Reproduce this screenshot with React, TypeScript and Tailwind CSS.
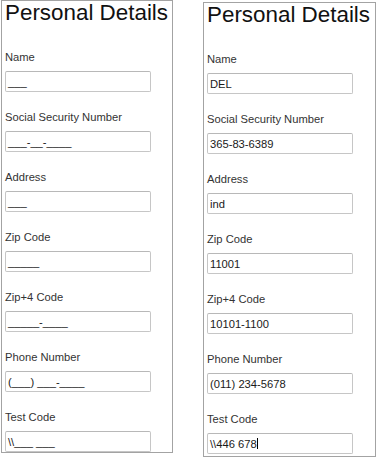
import React from "react";

type Field = { label: string; value: string };

const leftFields: Field[] = [
  { label: "Name", value: "___" },
  { label: "Social Security Number", value: "___-__-____" },
  { label: "Address", value: "___" },
  { label: "Zip Code", value: "_____" },
  { label: "Zip+4 Code", value: "_____-____" },
  { label: "Phone Number", value: "(___) ___-____" },
  { label: "Test Code", value: "\\\\___ ___" },
];

const rightFields: Field[] = [
  { label: "Name", value: "DEL" },
  { label: "Social Security Number", value: "365-83-6389" },
  { label: "Address", value: "ind" },
  { label: "Zip Code", value: "11001" },
  { label: "Zip+4 Code", value: "10101-1100" },
  { label: "Phone Number", value: "(011) 234-5678" },
  { label: "Test Code", value: "\\\\446 678" },
];

function Panel({ fields, caretLast, className }: { fields: Field[]; caretLast?: boolean; className?: string }) {
  return (
    <div
      className={
        "w-[172px] shrink-0 border border-[#a3a3a3] bg-white pl-[3px] flex flex-col " + (className ?? "")
      }
    >
      <div className="h-[22px] mt-[1px] -ml-[0px] text-[22.4px] leading-[22px] text-[#111] whitespace-nowrap">
        Personal Details
      </div>
      <div className="flex flex-col mt-[26px] gap-[18px]">
        {fields.map((f, i) => (
          <div key={i} className="flex flex-col gap-[7px]">
            <div className="h-[14px] text-[11.2px] leading-[14px] text-[#333] whitespace-nowrap">{f.label}</div>
            <div className="w-[146px] h-[21px] border border-[#c6c6c6] border-t-[#b8b8b8] rounded-[2px] bg-white px-[2px] flex items-center text-[11.2px] leading-[14px] text-[#1a1a1a] whitespace-nowrap overflow-hidden">
              <span>{f.value}</span>
              {caretLast && i === fields.length - 1 && (
                <span className="inline-block w-[1px] h-[11px] bg-black ml-[0px]" />
              )}
            </div>
          </div>
        ))}
      </div>
    </div>
  );
}

export default function App() {
  return (
    <div className="w-[376px] h-[458px] bg-white overflow-hidden font-['Liberation_Sans',Arial,sans-serif]">
      <div className="flex items-start pl-[1px]">
        <Panel fields={leftFields} className="h-[453px]" />
        <Panel fields={rightFields} caretLast className="ml-[30px] mt-[2px] h-[455px] w-[173px]" />
      </div>
    </div>
  );
}
